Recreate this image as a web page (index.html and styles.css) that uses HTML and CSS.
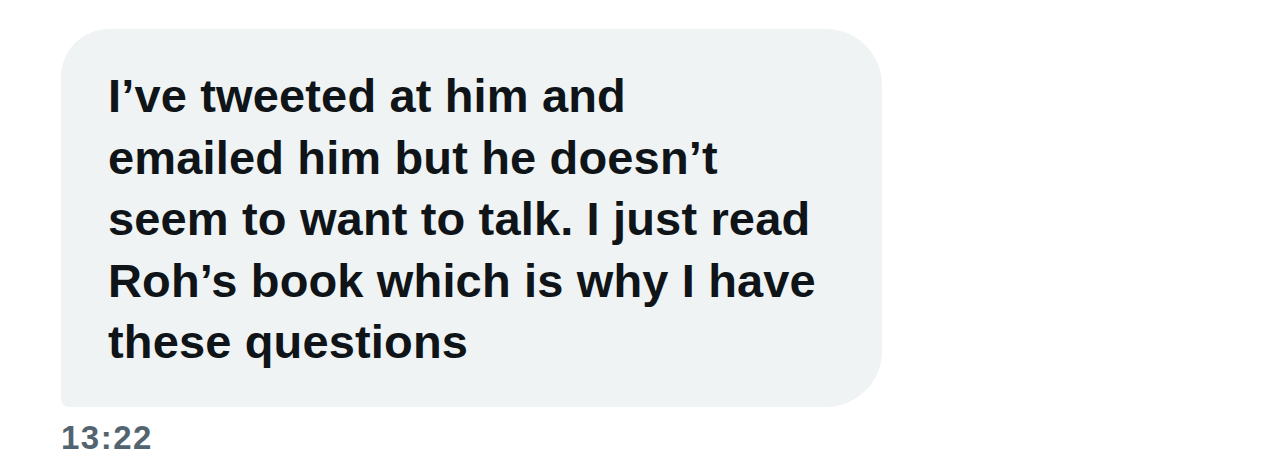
FILE: index.html
```html
<!DOCTYPE html>
<html>
<head>
<meta charset="utf-8">
<link rel="stylesheet" href="styles.css">
</head>
<body>
<div class="thread">
  <div class="bubble">
    <p class="msg">I’ve tweeted at him and<br>emailed him but he doesn’t<br>seem to want to talk. I just read<br>Roh’s book which is why I have<br>these questions</p>
  </div>
  <div class="time">13:22</div>
</div>
</body>
</html>
```
FILE: styles.css
```css
html, body {
  margin: 0;
  padding: 0;
  background: #ffffff;
}
.thread {
  padding: 29px 0 0 61px;
  font-family: "Liberation Sans", Arial, sans-serif;
}
.bubble {
  width: 821px;
  box-sizing: border-box;
  height: 378px;
  background: #eff3f4;
  border-radius: 48px 56px 56px 8px;
  padding: 36px 0 0 47px;
}
.msg {
  margin: 0;
  font-size: 47px;
  line-height: 61.5px;
  font-weight: 700;
  letter-spacing: 0.15px;
  color: #0f1419;
}
.time {
  margin-top: 11px;
  font-size: 33px;
  line-height: 40px;
  font-weight: 700;
  letter-spacing: 1.5px;
  color: #536471;
}
```
